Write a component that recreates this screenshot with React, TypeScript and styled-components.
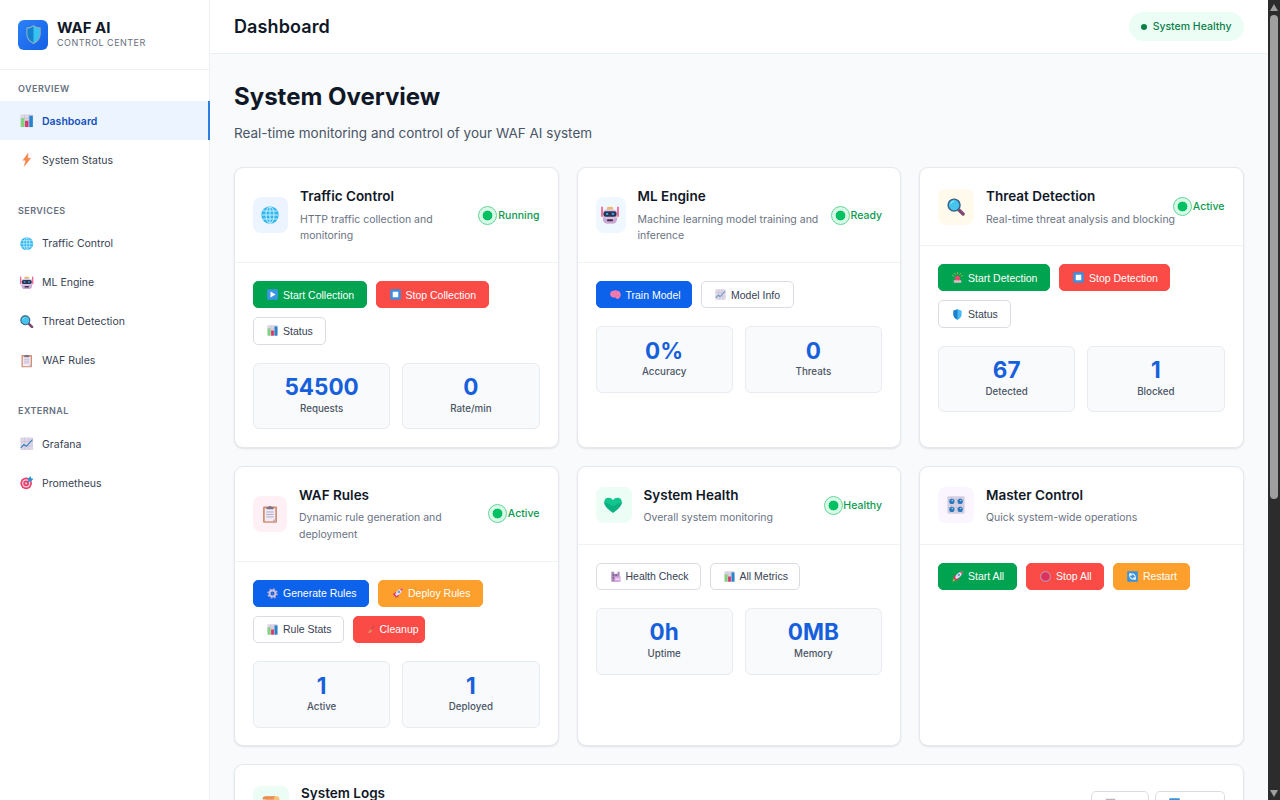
import React from "react";
import styled, { createGlobalStyle } from "styled-components";

const Global = createGlobalStyle`
  * { box-sizing: border-box; }
  body { margin: 0; overflow: hidden; background: #f8fafc; font-family: Inter, "Open Sans", sans-serif; color: #101828; }
  h1, h2, h3, p { margin: 0; }
`;

const icons: Record<string, React.ReactNode> = {
  bars: (
    <>
      <rect x="0.5" y="0.5" width="15" height="15" rx="1" fill="#dcd5e4" />
      <path d="M0.5 5.5h15M0.5 10.5h15M5.5 .5v15M10.5 .5v15" stroke="#c4b8d0" strokeWidth=".6" />
      <rect x="1" y="5" width="4" height="10.5" fill="#7fd67a" />
      <rect x="6" y="8" width="4" height="7.5" fill="#d8366c" />
      <rect x="11" y="2" width="4.2" height="13.5" fill="#2684cc" />
    </>
  ),
  bolt: <path d="M9.5 0.3 3.5 8.6h3.2L5 15.7l7.7-9.4H9.2z" fill="#f98a4b" stroke="#ef6b3d" strokeWidth=".4" />,
  globe: (
    <>
      <circle cx="8" cy="8" r="7.7" fill="#33b6ee" />
      <g fill="none" stroke="#c4f0ff" strokeWidth=".9">
        <ellipse cx="8" cy="8" rx="3.6" ry="7.4" />
        <path d="M8 .5v15M.6 8h14.8M1.7 4.4h12.6M1.7 11.6h12.6" />
      </g>
    </>
  ),
  robot: (
    <>
      <path d="M.9 1.2v8M15.1 1.2v8" stroke="#f0447c" strokeWidth="1.3" strokeLinecap="round" />
      <rect x="5.2" y=".8" width="5.6" height="2.6" rx="1" fill="#f2b45e" />
      <path d="M1.7 4.5Q8 .8 14.3 4.5v7Q13.6 15.6 10.5 15.6h-5Q2.4 15.6 1.7 11.5z" fill="#d9c2df" />
      <path d="M1.7 10.5Q8 14 14.3 10.5v1Q13.6 15.6 10.5 15.6h-5Q2.4 15.6 1.7 11.5z" fill="#c9a8d4" />
      <rect x="2.2" y="4.6" width="11.6" height="5" rx="2" fill="#2d3352" />
      <circle cx="5.4" cy="7" r="1.1" fill="#2fa6ea" />
      <circle cx="10.6" cy="7" r="1.1" fill="#2fa6ea" />
      <rect x="5.3" y="11.8" width="5.4" height="1.7" rx=".8" fill="#46304f" />
    </>
  ),
  search: (
    <>
      <path d="m10.6 10.6 3.7 3.6" stroke="#7c4a72" strokeWidth="3" strokeLinecap="round" />
      <circle cx="6.3" cy="6.3" r="5.3" fill="#45c5ec" stroke="#38638c" strokeWidth="1.3" />
      <path d="M3.2 5.2A3.6 3.6 0 0 1 6 2.8" fill="none" stroke="#8de4f8" strokeWidth="1" />
    </>
  ),
  clipboard: (
    <>
      <rect x="1.8" y="1.3" width="12.4" height="14.5" rx="1" fill="#d38d6e" />
      <path d="M3.3 3h9.4v11.5H3.3z" fill="#f1ebf7" />
      <path d="M10 14.5 12.7 12v2.5z" fill="#bdb0cc" />
      <path d="M4.7 6.2h6.6M4.7 8.4h6.6M4.7 10.6h6.6" stroke="#aaa0bd" strokeWidth=".8" />
      <path d="M5 1.8h1.6a1.5 1.5 0 0 1 2.8 0H11v2H5z" fill="#7c7088" />
    </>
  ),
  trend: (
    <>
      <rect x=".5" y=".5" width="15" height="15" rx="1" fill="#ddd6e7" />
      <path d="M.5 5.5h15M.5 10.5h15M5.5 .5v15M10.5 .5v15" stroke="#c4b9d2" strokeWidth=".6" />
      <path d="m1 13 3.6-4 3 2L14.8 3" fill="none" stroke="#2f82bd" strokeWidth="1.3" />
    </>
  ),
  target: (
    <>
      <circle cx="7.3" cy="8.7" r="6.9" fill="#e83f6b" />
      <circle cx="7.3" cy="8.7" r="4.9" fill="#f5d6e2" />
      <circle cx="7.3" cy="8.7" r="3.4" fill="#e83f6b" />
      <circle cx="7.3" cy="8.7" r="1.3" fill="#fbe5ed" />
      <path d="m7.3 8.7 5-5" stroke="#8c3d5a" strokeWidth=".8" />
      <path d="M9.7 6.4 9.4 3.2 12.6 0l.6 2.7 2.8.5-3.1 3.2z" fill="#2b93d8" />
    </>
  ),
  shield: (
    <>
      <path d="M8 .4 14 2.5v5q0 5.5-6 8.2-6-2.7-6-8.2v-5z" fill="#49b9f5" />
      <path d="M8 .4v15.3q-6-2.7-6-8.2v-5z" fill="#1c80cc" />
    </>
  ),
  logo: (
    <>
      <path d="M8 .6Q10 2.3 13.6 2.6v5q0 5.1-5.6 7.9-5.6-2.8-5.6-7.9v-5Q6 2.3 8 .6z" fill="#35c3f2" stroke="#94a9ba" strokeWidth=".9" />
      <path d="M8 1.3v13.6q-5.1-2.7-5.1-7.4V3.1Q6 2.8 8 1.3z" fill="#1681cf" />
    </>
  ),
  play: (
    <>
      <rect x=".3" y=".3" width="15.4" height="15.4" rx="1" fill="#3b94e6" />
      <path d="m5 3.5 7.5 4.5L5 12.5z" fill="#fff" />
    </>
  ),
  stop: (
    <>
      <rect x=".3" y=".3" width="15.4" height="15.4" rx="1" fill="#3b8fdc" />
      <rect x="4" y="4" width="8" height="8" fill="#fff" />
    </>
  ),
  brain: (
    <>
      <path d="M.5 9C-.5 5.5 2 2.5 5 2.7q3-2 6 0 3.5.3 4.5 4.3.5 3-1 5-1 2.5-4 2.3-2 0-2.5-2Q1.5 12.5.5 9z" fill="#f77daf" />
      <path d="M3 7q3-2 4 0M8 4q2 1 1 4M10 10q3 0 3-3M5 10q2-1 3 1" fill="none" stroke="#e0609a" strokeWidth=".8" />
    </>
  ),
  siren: (
    <>
      <path d="M4 12 5 6.5q3-3 6 0l1 5.5z" fill="#f0466c" />
      <rect x="2.5" y="12" width="11" height="3.5" rx="1" fill="#e3bccb" />
      <path d="M8 .3v3M3 1.5l2 2.5M13 1.5 11 4M.5 5l2.5 1M15.5 5 13 6" stroke="#f5b44d" strokeWidth="1" />
    </>
  ),
  gear: (
    <>
      <circle cx="8" cy="8" r="6.4" fill="none" stroke="#b3aad2" strokeWidth="2.6" strokeDasharray="2.5 2.52" />
      <circle cx="8" cy="8" r="4.3" fill="none" stroke="#c9bfe0" strokeWidth="2.8" />
      <circle cx="8" cy="8" r="1.5" fill="#6d6aa6" />
    </>
  ),
  rocket: (
    <>
      <path d="m1.5 9 4-3.5 1.5 5L5.5 14zM6 9l4.5 1.5L7 14.5z" fill="#d93465" />
      <path d="M4.5 9.5Q7 2 15.5.5 14.5 9 6.5 11.5z" fill="#e3d9ee" />
      <path d="M11.5 1.7Q13.5.8 15.5.5q-.3 2-1 4z" fill="#e73d68" />
      <circle cx="10" cy="5.7" r="1.6" fill="#5794c7" />
      <path d="m.5 15.5 2-4.5 2.5 2.5z" fill="#f7a342" />
    </>
  ),
  broom: (
    <>
      <path d="M15.5 0 9 8" stroke="#8e474d" strokeWidth="1.6" />
      <path d="M8.5 7 11 9.5q-2 6-8.5 6.3 0-6 6-8.8z" fill="#d9925a" />
    </>
  ),
  hospital: (
    <>
      <path d="M2 1h4v3h5V1h3v14.5H2z" fill="#a989b7" />
      <path d="M4 5h2v2H4zM8 5h2v2H8zM4 9h2v2H4z" fill="#704f86" />
      <rect x="6.5" y="8" width="9" height="7.5" fill="#dba8e4" />
      <path d="M8 11.7h6" stroke="#fff" strokeWidth="1.3" />
    </>
  ),
  ring: (
    <>
      <circle cx="8" cy="8" r="7.9" fill="#bd93ad" />
      <circle cx="8" cy="8" r="6.3" fill="#df2f5d" />
    </>
  ),
  restart: (
    <>
      <rect x=".3" y=".3" width="15.4" height="15.4" rx="1" fill="#3593e0" />
      <path d="M4 8.5V4.5h5l3 2.5M12 7.5v4H7L4 9" fill="none" stroke="#fff" strokeWidth="1.5" />
      <path d="M4 2.5v4h4zM12 13.5v-4H8z" fill="#fff" />
    </>
  ),
  knobs: (
    <>
      <rect x=".3" y=".3" width="15.4" height="15.4" rx="1" fill="#d6cfe4" />
      {[[4.3, 4.8], [11.7, 4.8], [4.3, 11.9], [11.7, 11.9]].map(([x, y]) => (
        <g key={`${x}-${y}`}>
          <path d={`M${x} ${y - 3.4}v1M${x - 3} ${y - 1.5}l1 .5M${x + 3} ${y - 1.5}l-1 .5`} stroke="#8393b3" strokeWidth=".6" />
          <circle cx={x} cy={y} r="2.3" fill="#2b78bc" />
          <circle cx={x + 0.4} cy={y - 0.8} r=".7" fill="#9ed2f4" />
        </g>
      ))}
    </>
  ),
  heart: (
    <>
      <path d="M8 14.8C4.5 12.5.2 9.3.2 5.3c0-4.2 5.3-5 7.8-1.6 2.5-3.4 7.8-2.6 7.8 1.6 0 4-4.3 7.2-7.8 9.5z" fill="#12c48e" />
      <path d="M8 14.8C4.5 12.5.2 9.3.2 5.3L8 9l7.8-3.7c0 4-4.3 7.2-7.8 9.5z" fill="#0bb080" />
    </>
  ),
  scroll: (
    <>
      <path d="M3 1h10.5Q15.5 1 15.5 3.5V5H12v10.5H3.5V4z" fill="#f9c27c" />
      <path d="M.5 3.5Q.5 1 3 1h9Q10 2 10.5 4H1z" fill="#e98d55" />
    </>
  ),
  trash: <path d="M1 1h14v2H1zM3 4h10v11H3z" fill="#b9b5bf" />,
};

const Svg = styled.svg<{ $s: number }>`
  display: block;
  flex: none;
  width: ${(p) => p.$s}px;
  height: ${(p) => p.$s}px;
`;
const Icon = ({ name, size }: { name: string; size: number }) => (
  <Svg $s={size} viewBox="0 0 16 16" aria-hidden="true">
    {icons[name]}
  </Svg>
);

const Shell = styled.div`
  display: grid;
  grid-template-columns: 210px minmax(0, 1fr) 12.5px;
  height: 800px;
  overflow: hidden;
`;
const Sidebar = styled.aside`
  background: #fff;
  border-right: 1px solid #eceff3;
`;
const Brand = styled.div`
  display: flex;
  align-items: center;
  gap: 9px;
  height: 70px;
  padding: 0 18px;
  border-bottom: 1px solid #eef0f3;
`;
const BrandMark = styled.div`
  display: grid;
  place-items: center;
  width: 30px;
  height: 30px;
  border-radius: 6px;
  background: linear-gradient(135deg, #2b80f8, #1560e6);
`;
const BrandName = styled.div`
  font-size: 15px;
  line-height: 18px;
  font-weight: 700;
`;
const BrandSub = styled.div`
  margin-bottom: 2px;
  font-size: 9px;
  line-height: 12px;
  letter-spacing: 0.47px;
  color: #667080;
`;
const NavSection = styled.section`
  padding-bottom: 17.6px;
  &:first-of-type { padding-top: 4.5px; }
`;
const NavTitle = styled.h3`
  height: 26.6px;
  padding: 7px 18px 0;
  font-size: 9px;
  line-height: 14px;
  font-weight: 600;
  letter-spacing: 0.45px;
  color: #667080;
`;
const NavItem = styled.div<{ $active?: boolean }>`
  display: flex;
  align-items: center;
  gap: 8.5px;
  height: 39.1px;
  padding: 1px 0 0 20px;
  margin-right: -1px;
  font-size: 10.5px;
  font-weight: ${(p) => (p.$active ? 600 : 400)};
  color: ${(p) => (p.$active ? "#1550bd" : "#364153")};
  background: ${(p) => (p.$active ? "#ecf5ff" : "transparent")};
  border-right: 2px solid ${(p) => (p.$active ? "#2b7de0" : "transparent")};
`;

const Main = styled.main`
  min-width: 0;
  overflow: hidden;
`;
const TopBar = styled.header`
  display: flex;
  align-items: center;
  justify-content: space-between;
  height: 54px;
  padding: 0 24px;
  background: #fff;
  border-bottom: 1px solid #eceff3;
`;
const TopTitle = styled.h2`
  font-size: 18px;
  font-weight: 600;
  letter-spacing: 0.1px;
`;
const Health = styled.div`
  display: flex;
  align-items: center;
  gap: 5.5px;
  height: 29px;
  padding: 0 12px;
  border-radius: 15px;
  background: #ecfdf5;
  color: #0b7f49;
  font-size: 10.5px;
  font-weight: 500;
  &::before {
    content: "";
    width: 6px;
    height: 6px;
    border-radius: 50%;
    background: #0b7f49;
  }
`;
const Content = styled.div`
  padding: 24.75px 24px 0;
`;
const PageTitle = styled.h1`
  font-size: 24px;
  line-height: 36px;
  font-weight: 700;
`;
const PageSub = styled.p`
  margin: 8px 0 23px;
  font-size: 13.5px;
  line-height: 21.5px;
  color: #4a5565;
`;
const Grid = styled.div`
  display: grid;
  grid-template-columns: repeat(3, minmax(0, 1fr));
  grid-template-rows: 280.5px 280.5px 200px;
  column-gap: 18px;
  row-gap: 18px;
`;
const Panel = styled.article<{ $wide?: boolean }>`
  grid-column: ${(p) => (p.$wide ? "1 / -1" : "auto")};
  min-width: 0;
  background: #fff;
  border: 1px solid #e5e8ec;
  border-radius: 9px;
  box-shadow: 0 1px 2px rgba(16, 24, 40, 0.1);
`;
const PanelHead = styled.div`
  display: flex;
  align-items: center;
  padding: 18px;
  border-bottom: 1px solid #f0f2f4;
`;
const Tile = styled.div<{ $bg: string; $w: number }>`
  display: grid;
  place-items: center;
  flex: none;
  width: ${(p) => p.$w}px;
  height: 36px;
  margin-right: 12px;
  padding-right: 1px;
  border-radius: 8px;
  background: ${(p) => p.$bg};
`;
const PanelText = styled.div`
  flex: 1;
  min-width: 0;
`;
const PanelTitle = styled.h3`
  padding-top: 0.2px;
  font-size: 13.5px;
  line-height: 20px;
  font-weight: 600;
`;
const PanelDesc = styled.p<{ $w: number }>`
  margin: 5.1px 0 -1.3px;
  width: ${(p) => p.$w}px;
  font-size: 10.5px;
  line-height: 16.9px;
  color: #6a7282;
`;
const State = styled.div`
  display: flex;
  align-items: center;
  gap: 2px;
  font-size: 10.5px;
  font-weight: 500;
  color: #0b9a4d;
  &::before {
    content: "";
    width: 17px;
    height: 17px;
    margin-right: -1.2px;
    border-radius: 50%;
    border: 1.5px solid #5fd797;
    background: radial-gradient(circle, #00c162 4.6px, #d9f8e7 5.2px);
  }
`;
const PanelBody = styled.div`
  padding: 18px;
`;
const Actions = styled.div<{ $gap?: number }>`
  display: flex;
  flex-wrap: wrap;
  gap: ${(p) => p.$gap ?? 9}px;
`;
type Tone = "green" | "red" | "blue" | "orange" | "plain";
const tones: Record<Tone, string> = {
  green: "#00a350",
  red: "#fb4b47",
  blue: "#0c62ea",
  orange: "#fd9f2c",
  plain: "#ffffff",
};
const Button = styled.button<{ $tone: Tone; $w: number; $h?: number }>`
  display: flex;
  align-items: center;
  gap: 5px;
  width: ${(p) => p.$w}px;
  height: ${(p) => p.$h ?? 27.3}px;
  padding: 0 0 0 13px;
  border: 1px solid ${(p) => (p.$tone === "plain" ? "#d9dde3" : tones[p.$tone])};
  border-radius: 5px;
  background: ${(p) => tones[p.$tone]};
  color: ${(p) => (p.$tone === "plain" ? "#364153" : "#fff")};
  font: 10.5px "Liberation Sans", Arial, sans-serif;
  white-space: nowrap;
`;
const Stats = styled.div`
  display: grid;
  grid-template-columns: 1fr 1fr;
  gap: 12px;
  margin-top: 18px;
`;
const Stat = styled.div`
  height: 66.75px;
  padding-top: 11.5px;
  text-align: center;
  border: 1px solid #e8ebef;
  border-radius: 6px;
  background: #f9fafc;
`;
const StatValue = styled.div`
  font-size: 22.5px;
  line-height: 23px;
  font-weight: 700;
  color: #1760dc;
`;
const StatLabel = styled.div`
  margin-top: 3.5px;
  font-size: 9.75px;
  line-height: 14px;
  font-weight: 500;
  color: #4a5565;
`;

const Track = styled.div`
  display: flex;
  flex-direction: column;
  align-items: center;
  justify-content: space-between;
  padding: 4px 0 3px;
  background: #2c2c2c;
`;
const Thumb = styled.div`
  width: 8px;
  height: 484px;
  margin: 4px 0 auto;
  border-radius: 4px;
  background: #9f9f9f;
`;
const Arrow = styled.div<{ $down?: boolean }>`
  border: 4px solid transparent;
  ${(p) => (p.$down ? "border-top: 7px solid #9f9f9f; border-bottom: 0;" : "border-bottom: 7px solid #9f9f9f; border-top: 0;")}
`;

type Action = [string, string, Tone, number, number?];
interface Card {
  title: string;
  desc: string;
  icon: string;
  bg: string;
  tile: number;
  descWidth: number;
  state?: string;
  actions: Action[];
  stats?: [string, string][];
}

const cards: Card[] = [
  {
    title: "Traffic Control", desc: "HTTP traffic collection and monitoring", icon: "globe", bg: "#ecf5ff", tile: 35, descWidth: 160, state: "Running",
    actions: [["play", "Start Collection", "green", 113.5], ["stop", "Stop Collection", "red", 113.5], ["bars", "Status", "plain", 73]],
    stats: [["54500", "Requests"], ["0", "Rate/min"]],
  },
  {
    title: "ML Engine", desc: "Machine learning model training and inference", icon: "robot", bg: "#f0f8ff", tile: 30, descWidth: 190, state: "Ready",
    actions: [["brain", "Train Model", "blue", 96.5], ["trend", "Model Info", "plain", 92.5]],
    stats: [["0%", "Accuracy"], ["0", "Threats"]],
  },
  {
    title: "Threat Detection", desc: "Real-time threat analysis and blocking", icon: "search", bg: "#fffaeb", tile: 36, descWidth: 200, state: "Active",
    actions: [["siren", "Start Detection", "green", 112], ["stop", "Stop Detection", "red", 111], ["shield", "Status", "plain", 72.5]],
    stats: [["67", "Detected"], ["1", "Blocked"]],
  },
  {
    title: "WAF Rules", desc: "Dynamic rule generation and deployment", icon: "clipboard", bg: "#fff0f6", tile: 34, descWidth: 165, state: "Active",
    actions: [["gear", "Generate Rules", "blue", 116], ["rocket", "Deploy Rules", "orange", 105.4], ["bars", "Rule Stats", "plain", 91], ["broom", "Cleanup", "red", 72, 7.5]],
    stats: [["1", "Active"], ["1", "Deployed"]],
  },
  {
    title: "System Health", desc: "Overall system monitoring", icon: "heart", bg: "#ecfdf5", tile: 36, descWidth: 180, state: "Healthy",
    actions: [["hospital", "Health Check", "plain", 105], ["bars", "All Metrics", "plain", 90]],
    stats: [["0h", "Uptime"], ["0MB", "Memory"]],
  },
  {
    title: "Master Control", desc: "Quick system-wide operations", icon: "knobs", bg: "#faf5ff", tile: 36, descWidth: 200,
    actions: [["rocket", "Start All", "green", 79], ["ring", "Stop All", "red", 78], ["restart", "Restart", "orange", 77]],
  },
];

const nav: [string, [string, string][]][] = [
  ["OVERVIEW", [["bars", "Dashboard"], ["bolt", "System Status"]]],
  ["SERVICES", [["globe", "Traffic Control"], ["robot", "ML Engine"], ["search", "Threat Detection"], ["clipboard", "WAF Rules"]]],
  ["EXTERNAL", [["trend", "Grafana"], ["target", "Prometheus"]]],
];

const ActionRow = ({ items, gap, height }: { items: Action[]; gap?: number; height?: number }) => (
  <Actions $gap={gap}>
    {items.map(([icon, label, tone, width, size]) => (
      <Button key={label} $tone={tone} $w={width} $h={height}>
        <Icon name={icon} size={size ?? 11} />
        {label}
      </Button>
    ))}
  </Actions>
);

export default function App() {
  return (
    <Shell>
      <Global />
      <Sidebar>
        <Brand>
          <BrandMark>
            <Icon name="logo" size={19} />
          </BrandMark>
          <div>
            <BrandName>WAF AI</BrandName>
            <BrandSub>CONTROL CENTER</BrandSub>
          </div>
        </Brand>
        {nav.map(([title, items]) => (
          <NavSection key={title}>
            <NavTitle>{title}</NavTitle>
            {items.map(([icon, label]) => (
              <NavItem key={label} $active={label === "Dashboard"}>
                <Icon name={icon} size={13.5} />
                {label}
              </NavItem>
            ))}
          </NavSection>
        ))}
      </Sidebar>
      <Main>
        <TopBar>
          <TopTitle>Dashboard</TopTitle>
          <Health>System Healthy</Health>
        </TopBar>
        <Content>
          <PageTitle>System Overview</PageTitle>
          <PageSub>Real-time monitoring and control of your WAF AI system</PageSub>
          <Grid>
            {cards.map((c) => (
              <Panel key={c.title}>
                <PanelHead>
                  <Tile $bg={c.bg} $w={c.tile}>
                    <Icon name={c.icon} size={18} />
                  </Tile>
                  <PanelText>
                    <PanelTitle>{c.title}</PanelTitle>
                    <PanelDesc $w={c.descWidth}>{c.desc}</PanelDesc>
                  </PanelText>
                  {c.state && <State>{c.state}</State>}
                </PanelHead>
                <PanelBody>
                  <ActionRow items={c.actions} />
                  {c.stats && (
                    <Stats>
                      {c.stats.map(([value, label]) => (
                        <Stat key={label}>
                          <StatValue>{value}</StatValue>
                          <StatLabel>{label}</StatLabel>
                        </Stat>
                      ))}
                    </Stats>
                  )}
                </PanelBody>
              </Panel>
            ))}
            <Panel $wide>
              <PanelHead>
                <Tile $bg="#ecfdf5" $w={36}>
                  <Icon name="scroll" size={18} />
                </Tile>
                <PanelText>
                  <PanelTitle>System Logs</PanelTitle>
                  <PanelDesc $w={300}>Real-time system activity</PanelDesc>
                </PanelText>
                <ActionRow
                  gap={6}
                  height={25}
                  items={[["trash", "Clear", "plain", 58.5], ["restart", "Refresh", "plain", 69.5]]}
                />
              </PanelHead>
            </Panel>
          </Grid>
        </Content>
      </Main>
      <Track>
        <Arrow />
        <Thumb />
        <Arrow $down />
      </Track>
    </Shell>
  );
}
